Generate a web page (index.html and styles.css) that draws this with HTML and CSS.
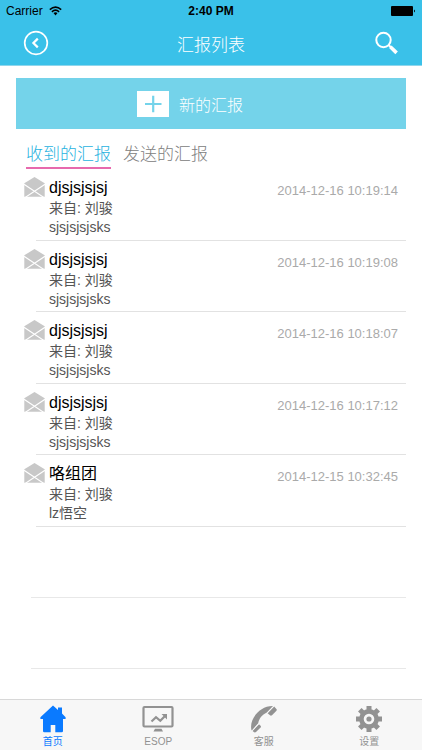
FILE: index.html
```
<!DOCTYPE html>
<html lang="zh-CN">
  <head>
    <meta charset="UTF-8" />
    <meta name="viewport" content="width=device-width, initial-scale=1.0" />
    <title>汇报列表</title>
    <link rel="stylesheet" href="styles.css">
  </head>
  <body>
    <header class="header">
      <!-- 状态栏 -->
      <div class="status">
        <div class="carrier">
          <span>Carrier</span>
          <svg width="13" height="10" viewBox="0 0 13 10" fill="none" stroke="#000" stroke-width="1.6">
            <path d="M0.8 3.6 Q6.5 -1.4 12.2 3.6" />
            <path d="M2.9 5.8 Q6.5 2.6 10.1 5.8" />
            <path d="M4.5 7.1 Q6.5 5.5 8.5 7.1 L6.5 9.4z" fill="#000" stroke="none" />
          </svg>
        </div>
        <span class="time">2:40 PM</span>
        <svg class="battery" width="25" height="10" viewBox="0 0 25 10">
          <rect width="22" height="10" rx="1" />
          <path d="M23 3.5 Q25 5 23 6.5z" />
        </svg>
      </div>
      <!-- 导航栏 -->
      <div class="nav">
        <button class="nav-btn" type="button" aria-label="返回">
          <svg width="26" height="26" viewBox="0 0 26 26" fill="none" stroke="#fff">
            <circle cx="13" cy="13" r="11.3" stroke-width="1.7" />
            <path d="M14.8 8.6 L10.4 13 L14.8 17.4" stroke-width="2.2" />
          </svg>
        </button>
        <h1 class="nav-title">汇报列表</h1>
        <button class="nav-btn" type="button" aria-label="搜索">
          <svg width="26" height="26" viewBox="0 0 26 26" fill="none" stroke="#fff">
            <circle cx="10.5" cy="10" r="7.2" stroke-width="2" />
            <path d="M15.6 15 L18 17.4" stroke-width="2" />
            <path d="M17.3 16.8 L23.6 22.9" stroke-width="3.6" />
          </svg>
        </button>
      </div>
    </header>

    <main class="main">
      <button class="new-btn" type="button">
        <svg width="32" height="26" viewBox="0 0 32 26">
          <rect width="32" height="26" fill="#fff" />
          <path d="M8 13 H24.5 M16.2 4.8 V21.2" stroke="#74d3ea" stroke-width="2.2" />
        </svg>
        <span>新的汇报</span>
      </button>

      <nav class="tabs">
        <a class="tab active" href="#received">收到的汇报</a>
        <a class="tab" href="#sent">发送的汇报</a>
      </nav>

      <svg class="defs" width="0" height="0">
        <symbol id="mail" viewBox="0 0 21 20">
          <path d="M0.3 6.3 L10.5 0 L20.7 6.3 V19.8 H0.3z" fill="#c8c8c8" />
          <path d="M0 7.2 L19.8 20.4 M21 7.2 L1.2 20.4" stroke="#fff" stroke-width="1.2" />
        </symbol>
      </svg>

      <ul class="list">
        <li class="row">
          <svg class="mail"><use href="#mail" /></svg>
          <div class="info">
            <h2>djsjsjsjsj</h2>
            <p>来自: 刘骏</p>
            <p>sjsjsjsjsks</p>
          </div>
          <time>2014-12-16 10:19:14</time>
        </li>
        <li class="row">
          <svg class="mail"><use href="#mail" /></svg>
          <div class="info">
            <h2>djsjsjsjsj</h2>
            <p>来自: 刘骏</p>
            <p>sjsjsjsjsks</p>
          </div>
          <time>2014-12-16 10:19:08</time>
        </li>
        <li class="row">
          <svg class="mail"><use href="#mail" /></svg>
          <div class="info">
            <h2>djsjsjsjsj</h2>
            <p>来自: 刘骏</p>
            <p>sjsjsjsjsks</p>
          </div>
          <time>2014-12-16 10:18:07</time>
        </li>
        <li class="row">
          <svg class="mail"><use href="#mail" /></svg>
          <div class="info">
            <h2>djsjsjsjsj</h2>
            <p>来自: 刘骏</p>
            <p>sjsjsjsjsks</p>
          </div>
          <time>2014-12-16 10:17:12</time>
        </li>
        <li class="row">
          <svg class="mail"><use href="#mail" /></svg>
          <div class="info">
            <h2>咯组团</h2>
            <p>来自: 刘骏</p>
            <p>lz悟空</p>
          </div>
          <time>2014-12-15 10:32:45</time>
        </li>
        <li class="row empty"></li>
        <li class="row empty"></li>
      </ul>
    </main>

    <!-- 底部菜单 -->
    <nav class="footer">
      <a class="menu active" href="#home">
        <svg width="32" height="28" viewBox="0 0 32 28" fill="currentColor">
          <path d="M16 0.5 L21 5 V2.5 H25 V8.6 L28.6 12.2 V14 H26 V26 Q26 27.3 24.7 27.3 H18.3 V20 H13.7 V27.3 H7.3 Q6 27.3 6 26 V14 H3.4 V12.2z" />
        </svg>
        <span>首页</span>
      </a>
      <a class="menu" href="#esop">
        <svg width="32" height="28" viewBox="0 0 32 28" fill="none" stroke="currentColor">
          <rect x="1.5" y="2" width="29" height="19.5" rx="1" stroke-width="2.2" />
          <path d="M9.5 16.5 L14 12.2 L18.3 15.8 L23.5 10.5" stroke-width="2.2" />
          <path d="M19.5 9 H25 V14.5z" fill="currentColor" stroke="none" />
          <path d="M13 23.8 H19.5 L21 26.6 H11.5z" fill="currentColor" stroke="none" />
        </svg>
        <span>ESOP</span>
      </a>
      <a class="menu" href="#service">
        <svg width="32" height="28" viewBox="0 0 32 28" fill="currentColor">
          <path d="M3.4 25 C1 14 12 0.6 25 1 L18.8 7.4 C14 9.5 10.8 14 10.2 18.2 L4 25.4z" />
          <path d="M19.6 8.2 L26.2 1.6 L28.8 4.4 Q29 5.2 28.2 6 L24 10.3 Q22.8 11 22 10.2z" />
          <path d="M4.6 26 L11 19.2 L12.8 21 Q13.2 21.8 12.6 22.5 L8 27 Q6.8 27.8 5.8 27z" />
          <path d="M18.8 8.4 L26 1 M4 25.8 L11 18.4" stroke="#f7f7f7" stroke-width="0.8" />
        </svg>
        <span>客服</span>
      </a>
      <a class="menu" href="#setting">
        <svg width="32" height="28" viewBox="0 0 32 28" fill="none" stroke="currentColor">
          <circle cx="16" cy="14" r="7.6" stroke-width="4.6" />
          <path d="M16 1 V5 M16 23 V27 M3 14 H7 M25 14 H29 M6.8 4.8 L9.6 7.6 M22.4 20.4 L25.2 23.2 M6.8 23.2 L9.6 20.4 M22.4 7.6 L25.2 4.8" stroke-width="5" />
          <circle cx="16" cy="14" r="2.6" fill="currentColor" stroke="none" />
        </svg>
        <span>设置</span>
      </a>
    </nav>
  </body>
</html>
```

FILE: styles.css
```
* {
  box-sizing: border-box;
  margin: 0;
  padding: 0;
}
body {
  display: flex;
  flex-direction: column;
  min-height: 100vh;
  background: #fff;
  font-family: "Liberation Sans", "Noto Sans CJK SC", sans-serif;
}
button {
  border: 0;
  background: none;
  font-family: inherit;
}
a {
  text-decoration: none;
}
svg {
  display: block;
  flex: none;
}
.header {
  height: 66px;
  background: #3ac1e9;
  border-bottom: 1px solid #8fd6ec;
}
/* 状态栏 */
.status {
  display: grid;
  grid-template-columns: 1fr auto 1fr;
  align-items: center;
  height: 22px;
  padding: 0 6px;
  font-size: 12px;
}
.carrier {
  display: flex;
  align-items: center;
  gap: 6px;
}
.time {
  font-weight: bold;
}
.battery {
  justify-self: end;
}
/* 导航栏 */
.nav {
  display: flex;
  align-items: center;
  justify-content: space-between;
  height: 42px;
  padding: 0 23px;
}
.nav-title {
  color: #fff;
  font-size: 17px;
  font-weight: 300;
}
.main {
  display: flex;
  flex: 1;
  flex-direction: column;
  padding: 12px 16px 30px;
}
.new-btn {
  display: flex;
  align-items: center;
  justify-content: center;
  gap: 10px;
  height: 51px;
  padding-right: 42px;
  background: #74d3ea;
  color: #fff;
  font-size: 16px;
  font-weight: 300;
}
.tabs {
  display: flex;
  gap: 12px;
  padding: 13px 10px 0;
}
.tab {
  height: 27px;
  border-bottom: 2px solid transparent;
  color: #808080;
  font-size: 17px;
  font-weight: 300;
  line-height: 25px;
}
.tab.active {
  border-color: #e769ad;
  color: #27b2e0;
}
.defs {
  position: absolute;
}
/* 列表 */
.list {
  display: flex;
  flex: 1;
  flex-direction: column;
  list-style: none;
}
.row {
  display: flex;
  flex: 1;
  min-height: 71px;
  padding: 8px 8px 0;
  background: linear-gradient(#e2e2e2, #e2e2e2) 20px 100% / 100% 1px no-repeat;
}
.row.empty {
  background-image: linear-gradient(#e8e8e8, #e8e8e8);
  background-position-x: 15px;
}
.mail {
  width: 21px;
  height: 20px;
}
.info {
  flex: 1;
  padding-left: 4px;
}
.info h2 {
  color: #000;
  font-size: 16px;
  font-weight: normal;
  line-height: 22px;
}
.info p {
  color: #555;
  font-size: 14px;
  line-height: 19px;
}
.row time {
  color: #aaa;
  font-size: 13px;
  line-height: 27px;
}
/* 底部菜单 */
.footer {
  display: flex;
  height: 51px;
  border-top: 1px solid #d8d8d8;
  background: #f7f7f7;
}
.menu {
  display: flex;
  flex: 1;
  flex-direction: column;
  align-items: center;
  gap: 1px;
  padding-top: 5px;
  color: #929292;
  font-size: 10px;
  line-height: 16px;
}
.menu.active {
  color: #0a7aff;
}
```
